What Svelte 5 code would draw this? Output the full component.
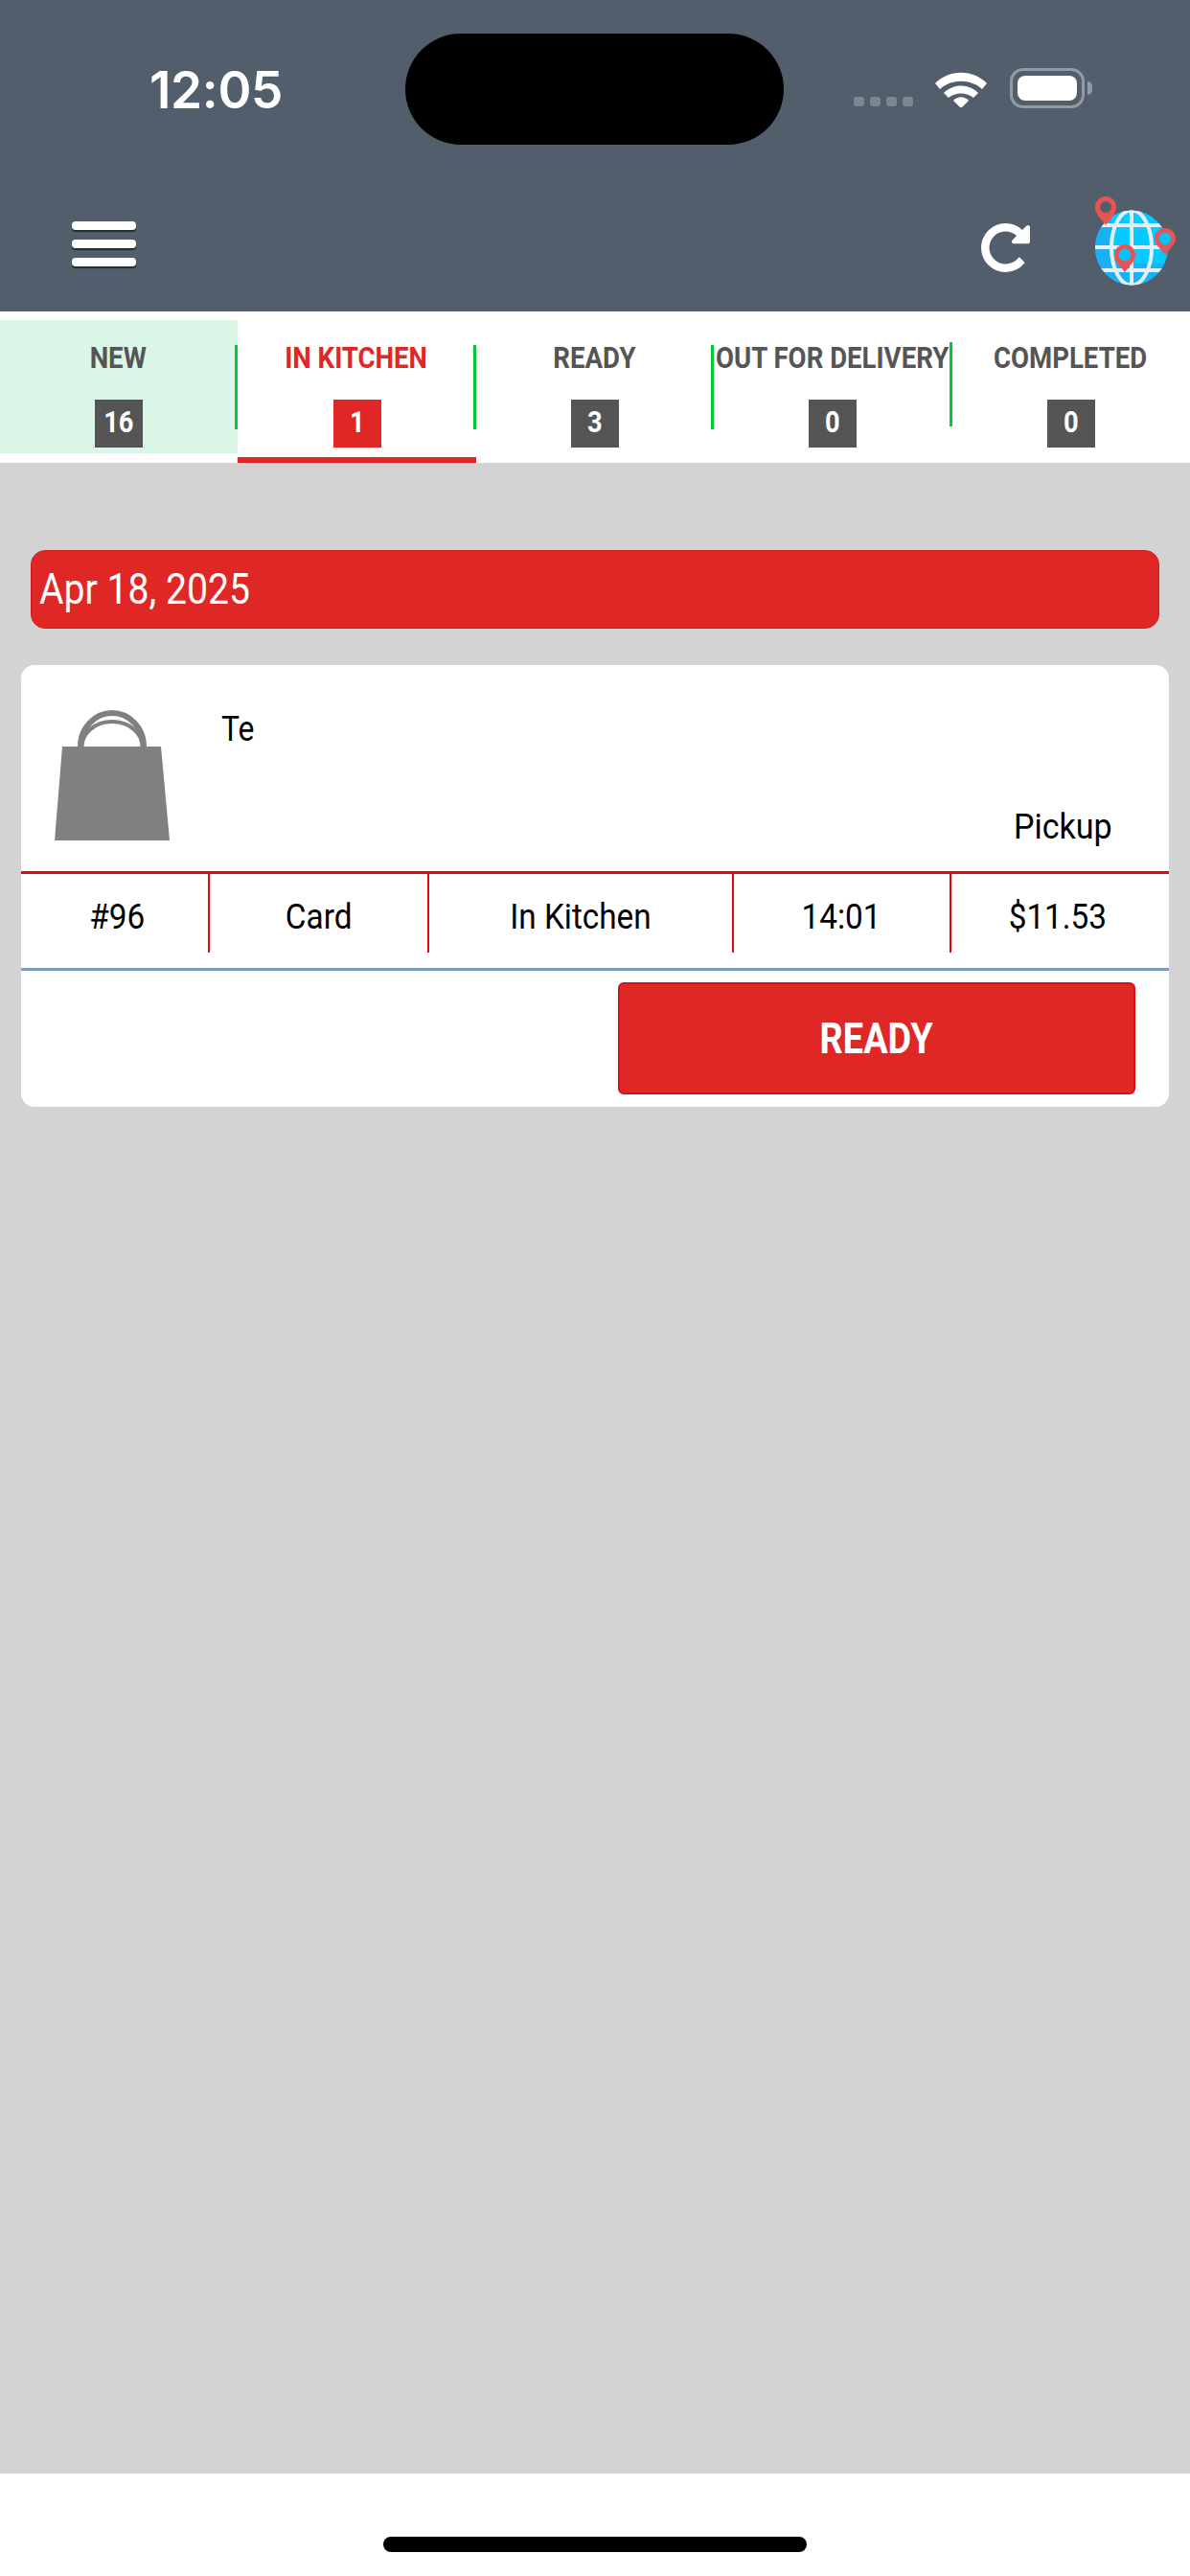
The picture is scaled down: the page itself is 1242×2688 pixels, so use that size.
<script>
  const tabs = [
    { label: 'NEW', count: 16, fresh: true },
    { label: 'IN KITCHEN', count: 1, active: true },
    { label: 'READY', count: 3 },
    { label: 'OUT FOR DELIVERY', count: 0 },
    { label: 'COMPLETED', count: 0 }
  ];

  const cells = ['#96', 'Card', 'In Kitchen', '14:01', '$11.53'];
</script>

<div class="app">
  <header class="top">
    <div class="status">
      <span class="time">12:05</span>
      <div class="island"></div>
      <div class="signal">
        <i></i><i></i><i></i><i></i>
      </div>
      <svg class="wifi" viewBox="0 0 54 40">
        <path d="M0 15 5 21C17 10 37 10 49 21L54 15C39 0 15 0 0 15Z" fill="#fff" />
        <path d="M9 25 14 30C21 24 33 24 40 30L45 25C35 15 19 15 9 25Z" fill="#fff" />
        <path d="M19 33 27 41 35 33C30 28 24 28 19 33Z" fill="#fff" />
      </svg>
      <div class="battery"><div class="level"></div></div>
      <div class="battery-tip"></div>
    </div>
    <div class="nav">
      <div class="burger"><i></i><i></i><i></i></div>
      <svg class="refresh" viewBox="128 128 1536 1536">
        <path fill="#fff" d="M1664 256v448q0 26-19 45t-45 19h-448q-42 0-59-40-17-39 14-69l138-138q-148-137-349-137-104 0-198.5 40.5t-163.5 109.5-109.5 163.5-40.5 198.5 40.5 198.5 109.5 163.5 163.5 109.5 198.5 40.5q119 0 225-52t179-147q7-10 23-12 15 0 25 9l137 138q9 8 9.5 20.5t-7.5 22.5q-109 132-264 204.5t-327 72.5q-156 0-298-61t-245-164-164-245-61-298 61-298 164-245 245-164 298-61q147 0 284.5 55.5t244.5 156.5l130-129q29-31 70-14 39 17 39 59z" />
      </svg>
      <svg class="globe" viewBox="1140 205 90 95">
        <defs>
          <clipPath id="earth"><ellipse cx="1181" cy="258.500" rx="38" ry="39" /></clipPath>
        </defs>
        <g clip-path="url(#earth)">
          <rect x="1140" y="215" width="90" height="85" fill="#05c9ff" />
          <path d="M1143 220H1160V297H1143ZM1143 275H1219V297H1143Z" fill="#19b1f4" />
          <g fill="none" stroke="#e6eef6" stroke-width="4">
            <ellipse cx="1181" cy="258.500" rx="21" ry="39" />
            <path d="M1181 218V298M1140 258H1222M1146 235H1216M1146 282H1216" />
          </g>
        </g>
        <path d="M1154 235C1149 228 1143 224 1143 216A11 11 0 0 1 1165 216C1165 224 1159 228 1154 235Z" fill="#ea5350" />
        <circle cx="1154" cy="216" r="6" fill="#525e6b" />
        <path d="M1174 284C1169 277 1163 273 1163 266A11 11 0 0 1 1185 266C1185 273 1179 277 1174 284Z" fill="#ea5350" />
        <circle cx="1174" cy="266" r="6.500" fill="#0cc1f5" />
        <path d="M1216 266C1211 259 1205 255 1205 249A11 11 0 0 1 1227 249C1227 255 1221 259 1216 266Z" fill="#ea5350" />
        <circle cx="1216" cy="249" r="6.500" fill="#0cc1f5" />
      </svg>
    </div>
  </header>

  <nav class="tabs">
    {#each tabs as tab, i}
      <div class="tab" class:active={tab.active} class:last-sep={i === 3}>
        <div class="tab-inner" class:fresh={tab.fresh}>
          <span class="tab-label">{tab.label}</span>
          <span class="badge"><span>{tab.count}</span></span>
        </div>
      </div>
    {/each}
  </nav>

  <main class="list">
    <div class="date"><span>Apr 18, 2025</span></div>

    <section class="card">
      <div class="card-head">
        <svg class="bag" viewBox="0 0 120 136">
          <path d="M8 38H111L120 136H0Z" fill="#808080" />
          <path d="M27 38A33 35 0 0 1 93 38" fill="none" stroke="#808080" stroke-width="6" />
          <path d="M28.500 38A31.500 26 0 0 1 91.500 38" fill="none" stroke="#808080" stroke-width="4" />
        </svg>
        <span class="name">Te</span>
        <span class="kind">Pickup</span>
      </div>
      <div class="cells">
        {#each cells as cell}
          <div class="cell"><span>{cell}</span></div>
        {/each}
      </div>
      <div class="actions">
        <button class="ready"><span>READY</span></button>
      </div>
    </section>
  </main>

  <footer class="home">
    <div class="indicator"></div>
  </footer>
</div>

<style>
  :global(body) {
    margin: 0;
    background: #d3d3d3;
  }

  .app {
    width: 1242px;
    height: 2688px;
    display: flex;
    flex-direction: column;
    font-family: Roboto, sans-serif;
    overflow: hidden;
  }

  .top {
    height: 325px;
    box-sizing: border-box;
    padding-top: 35px;
    background: #525e6b;
    color: #fff;
  }

  .status {
    height: 116px;
    display: flex;
    align-items: flex-start;
    position: relative;
  }

  .time {
    margin: 29px 0 0 156px;
    width: 267px;
    font-family: Inter, sans-serif;
    font-size: 53px;
    font-weight: 600;
    line-height: 60px;
    letter-spacing: -0.3px;
  }

  .island {
    width: 395px;
    height: 116px;
    border-radius: 58px;
    background: #000;
  }

  .signal {
    display: flex;
    gap: 6px;
    margin: 66px 0 0 73px;
  }

  .signal i {
    width: 11px;
    height: 10px;
    border-radius: 3px;
    background: #7d8791;
  }

  .wifi {
    width: 54px;
    height: 40px;
    margin: 37px 0 0 23px;
  }

  .battery {
    width: 78px;
    height: 42px;
    margin: 36px 0 0 24px;
    box-sizing: border-box;
    padding: 5px;
    border: 3px solid #939aa2;
    border-radius: 14px;
  }

  .level {
    height: 100%;
    border-radius: 8px;
    background: #fff;
  }

  .battery-tip {
    width: 5px;
    height: 14px;
    margin: 50px 0 0 3px;
    border-radius: 0 6px 6px 0;
    background: #939aa2;
  }

  .nav {
    display: flex;
    align-items: flex-start;
    height: 174px;
  }

  .burger {
    display: flex;
    flex-direction: column;
    gap: 10px;
    width: 67px;
    margin: 80px 0 0 75px;
  }

  .burger i {
    height: 9px;
    border-radius: 4px;
    background: #fff;
    box-shadow: 0 2px 1px #222a33;
  }

  .refresh {
    width: 51px;
    height: 51px;
    margin: 82px 0 0 882px;
    flex: none;
  }

  .globe {
    width: 90px;
    height: 95px;
    margin: 54px 0 0 65px;
    flex: none;
  }

  .tabs {
    display: grid;
    grid-template-columns: repeat(5, minmax(0, 1fr));
    height: 158px;
    background: #fff;
  }

  .tab {
    position: relative;
    box-sizing: border-box;
    padding-top: 9px;
  }

  .tab:not(:last-child)::after {
    content: '';
    position: absolute;
    right: 0;
    top: 35px;
    width: 3px;
    height: 88px;
    background: #00c93c;
  }

  .tab.last-sep::after {
    top: 32px;
  }

  .tab.active {
    border-bottom: 6px solid #df2726;
  }

  .tab-inner {
    height: 139px;
    display: flex;
    flex-direction: column;
    align-items: center;
    box-sizing: border-box;
    padding-top: 25px;
  }

  .tab-inner.fresh {
    background: #daf6e6;
  }

  .tab-label {
    font-size: 31px;
    line-height: 30px;
    font-weight: 700;
    color: #555;
    white-space: nowrap;
    transform: translateX(-1px) scaleX(0.89);
  }

  .active .tab-label {
    color: #df2726;
  }

  .badge {
    width: 50px;
    height: 50px;
    margin-top: 28px;
    background: #555;
    color: #fff;
    font-size: 31px;
    font-weight: 700;
    line-height: 48px;
    text-align: center;
  }

  .badge span {
    display: inline-block;
    transform: scaleX(0.88);
  }

  .active .badge {
    background: #df2726;
  }

  .list {
    flex: 1;
    box-sizing: border-box;
    padding: 91px 22px 0;
    background: #d3d3d3;
  }

  .date {
    height: 82px;
    margin: 0 10px;
    box-sizing: border-box;
    padding-left: 8px;
    border: 1px solid #d31a1a;
    border-radius: 15px;
    background: #df2726;
    color: #fff;
    font-size: 44px;
    line-height: 80px;
  }

  .date span {
    display: inline-block;
    transform: scaleX(0.89);
    transform-origin: left;
  }

  .card {
    margin-top: 38px;
    height: 461px;
    border-radius: 14px;
    background: #fff;
    overflow: hidden;
  }

  .card-head {
    position: relative;
    height: 215px;
    border-bottom: 3px solid #e30613;
  }

  .bag {
    position: absolute;
    left: 35px;
    top: 47px;
    width: 120px;
    height: 136px;
  }

  .name,
  .kind {
    position: absolute;
    font-size: 37px;
    line-height: 44px;
    color: #000;
  }

  .name {
    left: 209px;
    top: 45px;
    transform: scaleX(0.86);
    transform-origin: left;
  }

  .kind {
    right: 59px;
    top: 147px;
    transform: scaleX(0.92);
    transform-origin: right;
  }

  .cells {
    display: grid;
    grid-template-columns: 197px 229px 318px 227px 1fr;
    grid-template-rows: 82px;
    margin-bottom: 16px;
  }

  .cell {
    box-sizing: border-box;
    border-right: 2px solid #e30613;
    text-align: center;
    font-size: 37px;
    line-height: 82px;
    color: #000;
  }

  .cell:first-child {
    padding-left: 6px;
  }

  .cell:last-child {
    padding-right: 6px;
    border-right: none;
  }

  .cell span {
    display: inline-block;
    transform: translateY(4px) scaleX(0.9);
  }

  .actions {
    border-top: 3px solid #7d9cc0;
    display: flex;
    justify-content: flex-end;
    padding: 12px 35px 0 0;
  }

  .ready {
    width: 540px;
    height: 117px;
    padding: 0;
    border: 2px solid #d90f14;
    border-radius: 6px;
    background: #df2726;
    color: #fff;
    font-family: inherit;
    font-size: 44px;
    font-weight: 700;
  }

  .ready span {
    display: inline-block;
    transform: scaleX(0.86);
  }

  .home {
    height: 107px;
    background: #fff;
    display: flex;
    justify-content: center;
    padding-top: 66px;
    box-sizing: border-box;
  }

  .indicator {
    width: 442px;
    height: 16px;
    border-radius: 8px;
    background: #000;
  }
</style>
